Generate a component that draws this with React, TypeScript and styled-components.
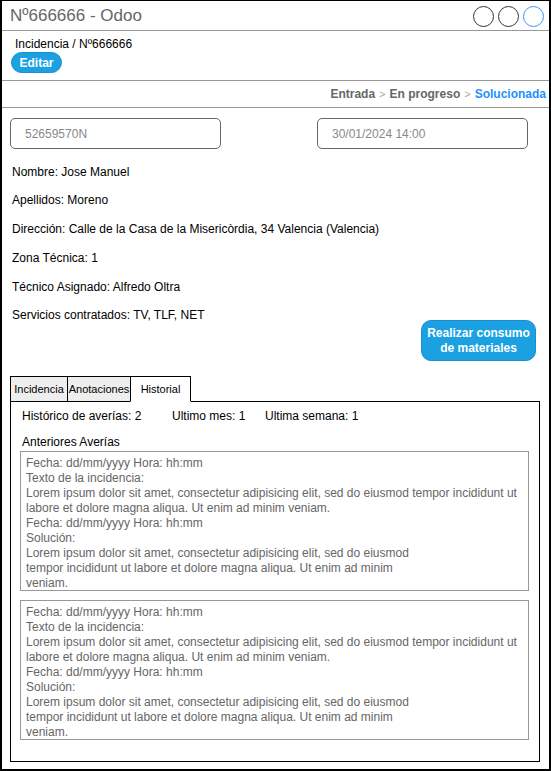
import React from "react";
import styled, { createGlobalStyle } from "styled-components";

const Global = createGlobalStyle`
  html, body { margin: 0; padding: 0; background: #fff; }
  body { font-family: "Liberation Sans", Arial, sans-serif; }
  * { box-sizing: border-box; }
`;

const Frame = styled.div`
  width: 551px;
  height: 771px;
  border: 2px solid #000;
  border-top-width: 1px;
  display: flex;
  flex-direction: column;
  background: #fff;
  overflow: hidden;
`;

const TitleBar = styled.div`
  height: 30px;
  display: flex;
  align-items: center;
  justify-content: space-between;
  padding: 0 5px 0 8px;
  border-bottom: 1px solid #999;
`;

const Title = styled.div`
  font-size: 17px;
  color: #666;
`;

const Dots = styled.div`
  display: flex;
  gap: 4px;
  margin-top: 1px;
`;

const Dot = styled.span<{ $blue?: boolean }>`
  width: 21px;
  height: 21px;
  border-radius: 50%;
  border: 1px solid ${(p) => (p.$blue ? "#3399ff" : "#333")};
`;

const Header = styled.div`
  height: 50px;
  padding: 6px 8px 0 13px;
  border-bottom: 1px solid #999;
  display: flex;
  flex-direction: column;
  align-items: flex-start;
`;

const Crumb = styled.div`
  font-size: 12px;
  color: #000;
  line-height: 14px;
`;

const PillButton = styled.button`
  margin-left: -4px;
  margin-top: 1px;
  height: 21px;
  width: 51px;
  border-radius: 11px;
  border: 1px solid #1a8fd0;
  background: #1ba1e2;
  color: #fff;
  font-family: "Liberation Sans", Arial, sans-serif;
  font-weight: bold;
  font-size: 12px;
  padding: 0;
  display: flex;
  align-items: center;
  justify-content: center;
`;

const StatusBar = styled.div`
  height: 27px;
  border-bottom: 1px solid #999;
  display: flex;
  justify-content: flex-end;
  align-items: center;
  padding-right: 3px;
  font-size: 12px;
  font-weight: bold;
  gap: 4px;
`;

const Stage = styled.span<{ $active?: boolean }>`
  color: ${(p) => (p.$active ? "#1e90ff" : "#666")};
`;

const Sep = styled.span`
  color: #aaa;
  font-weight: normal;
  font-size: 11px;
`;

const Body = styled.div`
  flex: 1;
  padding: 10px 8px 7px 8px;
  display: flex;
  flex-direction: column;
`;

const InputRow = styled.div`
  display: flex;
  justify-content: space-between;
  padding-right: 13px;
`;

const Field = styled.div`
  width: 211px;
  height: 31px;
  border: 1px solid #666;
  border-radius: 5px;
  font-size: 12px;
  color: #888;
  display: flex;
  align-items: center;
  padding-left: 14px;
`;

const InfoList = styled.div`
  display: flex;
  flex-direction: column;
  gap: 14.8px;
  margin-top: 15.5px;
  padding-left: 2px;
`;

const Info = styled.div`
  font-size: 12px;
  line-height: 14px;
  color: #000;
`;

const ActionRow = styled.div`
  display: flex;
  justify-content: flex-end;
  padding-right: 5px;
  margin-top: -2px;
`;

const ActionButton = styled.button`
  width: 115px;
  height: 41px;
  border-radius: 10px;
  border: 1px solid #1a8fd0;
  background: #1ba1e2;
  color: #fff;
  font-family: "Liberation Sans", Arial, sans-serif;
  font-weight: bold;
  font-size: 12px;
  line-height: 15px;
  padding: 0;
`;

const Tabs = styled.div`
  display: flex;
  margin-top: 15px;
`;

const Tab = styled.div<{ $active?: boolean; $w: number }>`
  width: ${(p) => p.$w}px;
  height: 26px;
  border: 1px solid #000;
  border-bottom: ${(p) => (p.$active ? "1px solid #fff" : "1px solid #000")};
  margin-left: -1px;
  &:first-child { margin-left: 0; }
  background: ${(p) => (p.$active ? "#fff" : "#eee")};
  font-size: 11px;
  display: flex;
  align-items: center;
  justify-content: center;
  color: #000;
  position: relative;
  z-index: 1;
  margin-bottom: -1px;
`;

const Panel = styled.div`
  flex: 1;
  margin-right: 1px;
  border: 1px solid #000;
  padding: 7px 10px 0 9px;
  display: flex;
  flex-direction: column;
`;

const Stats = styled.div`
  display: flex;
  font-size: 12px;
  padding-left: 2px;
  line-height: 14px;
`;

const Stat = styled.span<{ $w: number }>`
  width: ${(p) => p.$w}px;
`;

const SubTitle = styled.div`
  font-size: 12px;
  margin-top: 12px;
  padding-left: 2px;
  line-height: 14px;
`;

const Record = styled.div`
  margin-top: 2px;
  margin-bottom: 7px;
  border: 1px solid #999;
  height: 140px;
  padding: 4px 0 0 5px;
  font-size: 12px;
  line-height: 15px;
  color: #666;
`;

const Line = styled.div``;

const records = [0, 1];

export default function App() {
  return (
    <>
      <Global />
      <Frame>
        <TitleBar>
          <Title>Nº666666 - Odoo</Title>
          <Dots>
            <Dot />
            <Dot />
            <Dot $blue />
          </Dots>
        </TitleBar>
        <Header>
          <Crumb>Incidencia / Nº666666</Crumb>
          <PillButton>Editar</PillButton>
        </Header>
        <StatusBar>
          <Stage>Entrada</Stage>
          <Sep>&gt;</Sep>
          <Stage>En progreso</Stage>
          <Sep>&gt;</Sep>
          <Stage $active>Solucionada</Stage>
        </StatusBar>
        <Body>
          <InputRow>
            <Field>52659570N</Field>
            <Field>30/01/2024 14:00</Field>
          </InputRow>
          <InfoList>
            <Info>Nombre: Jose Manuel</Info>
            <Info>Apellidos: Moreno</Info>
            <Info>Dirección: Calle de la Casa de la Misericòrdia, 34 Valencia (Valencia)</Info>
            <Info>Zona Técnica: 1</Info>
            <Info>Técnico Asignado: Alfredo Oltra</Info>
            <Info>Servicios contratados: TV, TLF, NET</Info>
          </InfoList>
          <ActionRow>
            <ActionButton>
              Realizar consumo
              <br />
              de materiales
            </ActionButton>
          </ActionRow>
          <Tabs>
            <Tab $w={58}>Incidencia</Tab>
            <Tab $w={64}>Anotaciones</Tab>
            <Tab $w={61} $active>
              Historial
            </Tab>
          </Tabs>
          <Panel>
            <Stats>
              <Stat $w={150}>Histórico de averías: 2</Stat>
              <Stat $w={93}>Ultimo mes: 1</Stat>
              <Stat $w={120}>Ultima semana: 1</Stat>
            </Stats>
            <SubTitle>Anteriores Averías</SubTitle>
            {records.map((r) => (
              <Record key={r}>
                <Line>Fecha: dd/mm/yyyy Hora: hh:mm</Line>
                <Line>Texto de la incidencia:</Line>
                <Line>
                  Lorem ipsum dolor sit amet, consectetur adipisicing elit, sed do eiusmod tempor incididunt ut
                </Line>
                <Line>labore et dolore magna aliqua. Ut enim ad minim veniam.</Line>
                <Line>Fecha: dd/mm/yyyy Hora: hh:mm</Line>
                <Line>Solución:</Line>
                <Line>Lorem ipsum dolor sit amet, consectetur adipisicing elit, sed do eiusmod</Line>
                <Line>tempor incididunt ut labore et dolore magna aliqua. Ut enim ad minim</Line>
                <Line>veniam.</Line>
              </Record>
            ))}
          </Panel>
        </Body>
      </Frame>
    </>
  );
}
